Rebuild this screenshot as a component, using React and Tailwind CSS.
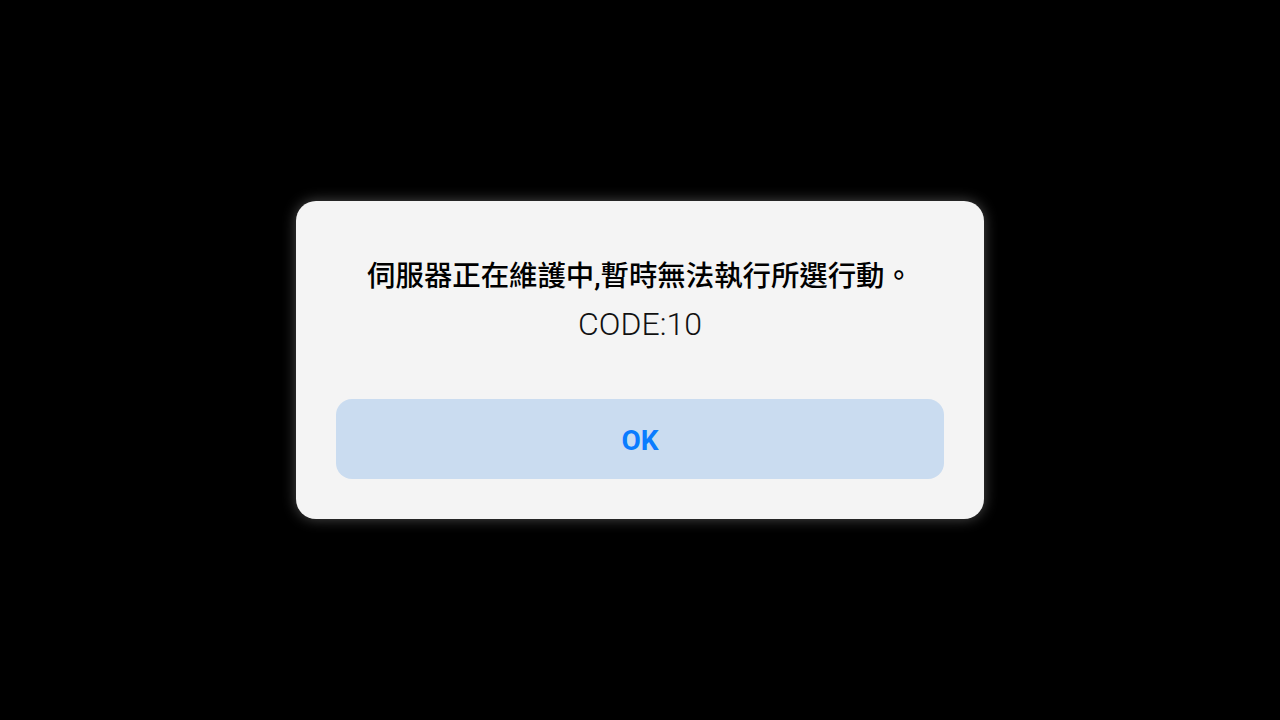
export default function App() {
  return (
    <div className="flex h-screen w-screen items-center justify-center bg-black">
      <div className="flex h-[318px] w-[688px] flex-col rounded-[20px] bg-[#f4f4f4] px-10 pb-10 pt-[57px] shadow-[0_0_14px_rgba(255,255,255,0.3)]">
        <p className="text-center font-['Roboto','Noto_Sans_CJK_TC',sans-serif] text-[28.4px] font-medium leading-[38px] text-black">
          伺服器正在維護中,暫時無法執行所選行動。
        </p>
        <p className="mt-2 text-center font-['Roboto',sans-serif] text-[32px] font-light leading-[40px] text-[#111]">
          CODE:10
        </p>
        <button className="mt-auto flex h-20 w-full items-center justify-center rounded-2xl bg-[#cadcf0] pt-1 font-['Roboto',sans-serif] text-[28px] font-bold text-[#0a7cff]">
          OK
        </button>
      </div>
    </div>
  );
}
